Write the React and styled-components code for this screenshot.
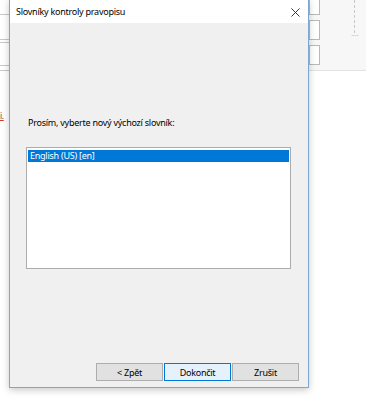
import React from 'react'
import styled, { createGlobalStyle } from 'styled-components'

const Global = createGlobalStyle`
  html, body {
    margin: 0;
    padding: 0;
    background: #fff;
  }
  body {
    font-family: 'Noto Sans', 'Open Sans', sans-serif;
    letter-spacing: -0.25px;
  }
`

const Screen = styled.div`
  position: relative;
  width: 366px;
  height: 400px;
  overflow: hidden;
  background: #fff;
  display: flex;
  flex-direction: row;
`

const LeftStrip = styled.div`
  width: 9px;
  display: flex;
  flex-direction: column;
`

const LeftRibbon = styled.div`
  height: 71px;
  display: flex;
  flex-direction: column;
`

const Rule = styled.div`
  height: 1px;
  margin-top: ${props => props.offset}px;
  background: #c8c8c8;
`

const Spelled = styled.span`
  margin-top: 40px;
  font-size: 8px;
  line-height: 10px;
  color: #444;
  text-decoration: underline;
  text-decoration-color: #d23c2c;
`

const Middle = styled.div`
  flex: 1;
`

const RightPanel = styled.div`
  width: 57px;
  height: 71px;
  background: #f7f7f7;
  border-bottom: 1px solid #e2e2e2;
  box-sizing: border-box;
  display: flex;
  flex-direction: row;
`

const Fields = styled.div`
  width: 11px;
  display: flex;
  flex-direction: column;
  gap: 5px;
`

const Field = styled.div`
  height: ${props => props.size}px;
  border: 1px solid #b9b9b9;
  border-top: ${props => (props.open ? 'none' : '1px solid #b9b9b9')};
  background: #fff;
  box-sizing: border-box;
`

const Guide = styled.div`
  margin-left: 34px;
  display: flex;
  flex-direction: column;
  align-items: flex-start;
`

const Dashes = styled.div`
  width: 0;
  height: 33px;
  border-left: 1px dashed #c9c9c9;
`

const Squiggle = styled.span`
  font-size: 7px;
  line-height: 6px;
  color: #bbb;
  margin-left: -3px;
`

const Dialog = styled.div`
  position: absolute;
  left: 9px;
  top: -1px;
  width: 300px;
  height: 389px;
  box-sizing: border-box;
  border: 1px solid #7fa6cf;
  background: #f0f0f0;
  box-shadow: 0 2px 7px rgba(0, 0, 0, 0.22);
  display: flex;
  flex-direction: column;
`

const TitleBar = styled.div`
  height: 23px;
  background: #fff;
  display: flex;
  align-items: center;
  justify-content: space-between;
  padding: 0 8px 0 6px;
`

const Title = styled.span`
  font-size: 9px;
  color: #000;
`

const Close = styled.svg`
  width: 9px;
  height: 9px;
  margin-top: 1px;
`

const Body = styled.div`
  flex: 1;
  display: flex;
  flex-direction: column;
  padding: 0 17px 6px 16px;
`

const Prompt = styled.div`
  margin-top: 94px;
  padding-left: 2px;
  font-size: 9px;
  line-height: 12px;
  color: #000;
`

const ListBox = styled.div`
  margin-top: 18px;
  height: 122px;
  background: #fff;
  border: 1px solid #acacac;
  box-sizing: border-box;
  padding: 2px 1px;
`

const Item = styled.div`
  height: 12px;
  line-height: 12px;
  font-size: 9px;
  padding-left: 2px;
  color: ${props => (props.selected ? '#fff' : '#000')};
  background: ${props => (props.selected ? '#0078d7' : 'transparent')};
`

const Buttons = styled.div`
  margin-top: auto;
  margin-right: -8px;
  display: flex;
  justify-content: flex-end;
  gap: 1px;
`

const Button = styled.button`
  width: 67px;
  height: 18px;
  padding: 0;
  box-sizing: border-box;
  font-family: inherit;
  letter-spacing: inherit;
  font-size: 9px;
  color: #000;
  background: ${props => (props.primary ? '#e5f1fb' : '#e1e1e1')};
  border: 1px solid ${props => (props.primary ? '#0078d7' : '#adadad')};
`

export default function App() {
  return (
    <>
      <Global />
      <Screen>
        <LeftStrip>
          <LeftRibbon>
            <Rule offset={14} />
            <Rule offset={24} />
            <Rule offset={2} />
            <Rule offset={22} />
            <Rule offset={4} />
          </LeftRibbon>
          <Spelled>i.</Spelled>
        </LeftStrip>
        <Middle />
        <RightPanel>
          <Fields>
            <Field size={15} open />
            <Field size={20} />
            <Field size={20} />
          </Fields>
          <Guide>
            <Dashes />
            <Squiggle>~~</Squiggle>
          </Guide>
        </RightPanel>
        <Dialog>
          <TitleBar>
            <Title>Slovníky kontroly pravopisu</Title>
            <Close viewBox="0 0 10 10">
              <path d="M0.5 0.5 L9.5 9.5 M9.5 0.5 L0.5 9.5" stroke="#222" strokeWidth="1" fill="none" />
            </Close>
          </TitleBar>
          <Body>
            <Prompt>Prosím, vyberte nový výchozí slovník:</Prompt>
            <ListBox>
              <Item selected>English (US) [en]</Item>
            </ListBox>
            <Buttons>
              <Button>&lt; Zpět</Button>
              <Button primary>Dokončit</Button>
              <Button>Zrušit</Button>
            </Buttons>
          </Body>
        </Dialog>
      </Screen>
    </>
  )
}
